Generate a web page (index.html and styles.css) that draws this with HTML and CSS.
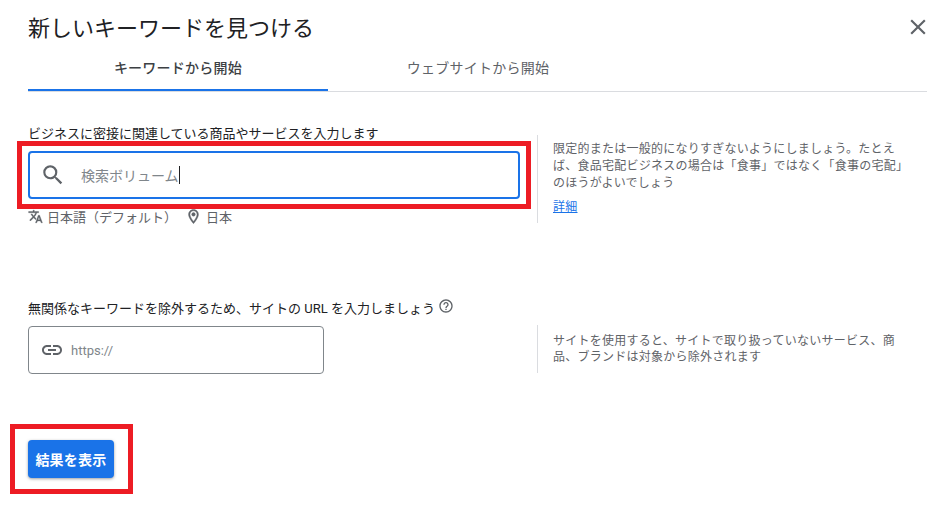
FILE: index.html
```html
<!DOCTYPE html>
<html lang="ja">
<head>
    <meta charset="UTF-8">
    <meta name="viewport" content="width=device-width, initial-scale=1.0">
    <title>新しいキーワードを見つける</title>
    <link rel="stylesheet" href="styles.css">
</head>
<body>
    <div class="dialog">
        <div class="dialog-header">
            <h2>新しいキーワードを見つける</h2>
            <svg class="close-icon" viewBox="0 0 24 24"><path d="M19 6.41 17.59 5 12 10.59 6.41 5 5 6.41 10.59 12 5 17.59 6.41 19 12 13.41 17.59 19 19 17.59 13.41 12z"/></svg>
        </div>
        <div class="tabs">
            <div class="tab active">キーワードから開始</div>
            <div class="tab">ウェブサイトから開始</div>
        </div>

        <div class="form-row first-row">
            <div class="form-main">
                <label class="field-label">ビジネスに密接に関連している商品やサービスを入力します</label>
                <div class="search-box">
                    <svg class="search-icon" viewBox="0 0 24 24"><path d="M15.5 14h-.79l-.28-.27A6.47 6.47 0 0 0 16 9.5 6.5 6.5 0 1 0 9.5 16c1.61 0 3.09-.59 4.23-1.57l.27.28v.79l5 4.99L20.49 19l-4.99-5zm-6 0C7.01 14 5 11.99 5 9.5S7.01 5 9.5 5 14 7.01 14 9.5 11.99 14 9.5 14z"/></svg>
                    <span class="search-text">検索ボリューム</span><span class="caret"></span>
                    <div class="highlight"></div>
                </div>
                <div class="locale">
                    <svg class="locale-icon" viewBox="0 0 24 24"><path d="m12.87 15.07-2.54-2.51.03-.03A17.52 17.52 0 0 0 14.07 6H17V4h-7V2H8v2H1v1.99h11.17C11.5 7.92 10.44 9.75 9 11.35 8.07 10.32 7.3 9.19 6.69 8h-2c.73 1.63 1.73 3.17 2.98 4.56l-5.09 5.02L4 19l5-5 3.11 3.11.76-2.04zM18.5 10h-2L12 22h2l1.12-3h4.75L21 22h2l-4.5-12zm-2.62 7 1.62-4.33L19.12 17h-3.24z"/></svg>
                    <span>日本語（デフォルト）</span>
                    <svg class="locale-icon pin" viewBox="0 0 24 24"><path d="M12 2C8.13 2 5 5.13 5 9c0 5.25 7 13 7 13s7-7.75 7-13c0-3.87-3.13-7-7-7zm0 17.1C10 16.5 7 12 7 9c0-2.76 2.24-5 5-5s5 2.24 5 5c0 3-3 7.5-5 10.1z"/><circle cx="12" cy="9" r="2.5"/></svg>
                    <span>日本</span>
                </div>
            </div>
            <div class="hint">
                <p>限定的または一般的になりすぎないようにしましょう。たとえば、食品宅配ビジネスの場合は「食事」ではなく「食事の宅配」のほうがよいでしょう</p>
                <a href="#" class="hint-link">詳細</a>
            </div>
        </div>

        <div class="form-row second-row">
            <div class="form-main">
                <label class="field-label">無関係なキーワードを除外するため、サイトの URL を入力しましょう<svg class="help-icon" viewBox="0 0 24 24"><path d="M11 18h2v-2h-2v2zm1-16C6.48 2 2 6.48 2 12s4.48 10 10 10 10-4.48 10-10S17.52 2 12 2zm0 18c-4.41 0-8-3.59-8-8s3.59-8 8-8 8 3.59 8 8-3.59 8-8 8zm0-14c-2.21 0-4 1.79-4 4h2c0-1.1.9-2 2-2s2 .9 2 2c0 2-3 1.75-3 5h2c0-2.25 3-2.5 3-5 0-2.21-1.79-4-4-4z"/></svg></label>
                <div class="url-box">
                    <svg class="link-icon" viewBox="0 0 24 24"><path d="M3.9 12c0-1.71 1.39-3.1 3.1-3.1h4V7H7c-2.76 0-5 2.24-5 5s2.24 5 5 5h4v-1.9H7c-1.71 0-3.1-1.39-3.1-3.1zM8 13h8v-2H8v2zm9-6h-4v1.9h4c1.71 0 3.1 1.39 3.1 3.1s-1.39 3.1-3.1 3.1h-4V17h4c2.76 0 5-2.24 5-5s-2.24-5-5-5z"/></svg>
                    <span class="url-text">https://</span>
                </div>
            </div>
            <div class="hint">
                <p>サイトを使用すると、サイトで取り扱っていないサービス、商品、ブランドは対象から除外されます</p>
            </div>
        </div>

        <div class="submit-wrap">
            <button type="button" class="submit-btn">結果を表示</button>
            <div class="highlight"></div>
        </div>
    </div>
</body>
</html>
```

FILE: styles.css
```css
body {
    margin: 0;
    background-color: white;
    color: #3c4043;
    font-family: Roboto, "Noto Sans CJK JP", sans-serif;
}
.dialog {
    padding: 0 11px 32px 28px;
}
.dialog-header {
    display: flex;
    justify-content: space-between;
    align-items: center;
    height: 56px;
}
h2 {
    margin: 2px 0 0;
    font-size: 22px;
    line-height: 28px;
    font-weight: 400;
    color: #202124;
}
.close-icon {
    width: 26px;
    height: 26px;
    margin: 0 -4px 2px 0;
    fill: #5f6368;
}
.tabs {
    display: flex;
    height: 35px;
    border-bottom: 1px solid #dadce0;
}
.tab {
    width: 300px;
    font-size: 14px;
    line-height: 24px;
    letter-spacing: 0.25px;
    text-align: center;
    color: #5f6368;
}
.tab.active {
    height: 33px;
    border-bottom: 2px solid #1a73e8;
    font-weight: 500;
    color: #3c4043;
}
.form-row {
    display: flex;
}
.first-row {
    margin-top: 43px;
    height: 88px;
}
.second-row {
    margin-top: 102px;
    height: 48px;
}
.form-main {
    width: 509px;
    flex-shrink: 0;
}
.first-row .form-main {
    margin-top: -9px;
}
.second-row .form-main {
    margin-top: -24px;
}
.field-label {
    display: flex;
    align-items: center;
    height: 16px;
    font-size: 13px;
    line-height: 16px;
    color: #202124;
}
.help-icon {
    width: 16px;
    height: 16px;
    margin: -6px 0 0 3px;
    fill: #5f6368;
}
.search-box {
    position: relative;
    display: flex;
    align-items: center;
    box-sizing: border-box;
    width: 492px;
    height: 48px;
    margin-top: 9px;
    padding-left: 10px;
    border: 2px solid #1a73e8;
    border-radius: 4px;
}
.search-icon {
    width: 26px;
    height: 26px;
    fill: #5f6368;
}
.search-text {
    margin-left: 15px;
    font-size: 14px;
    color: #80868b;
}
.caret {
    width: 1px;
    height: 18px;
    background-color: #202124;
}
.highlight {
    position: absolute;
    box-sizing: border-box;
    border: 5px solid #ed1c24;
}
.search-box .highlight {
    top: -12px;
    right: -13px;
    bottom: -12px;
    left: -13px;
}
.locale {
    display: flex;
    align-items: center;
    height: 18px;
    margin-top: 8px;
    font-size: 13px;
    color: #5f6368;
}
.locale-icon {
    width: 15px;
    height: 15px;
    margin-right: 4px;
    fill: #5f6368;
    stroke: #5f6368;
    stroke-width: 0.6;
}
.locale-icon.pin {
    width: 17px;
    height: 17px;
    margin-left: 8px;
    margin-right: 4px;
}
.url-box {
    display: flex;
    align-items: center;
    box-sizing: border-box;
    width: 296px;
    height: 48px;
    margin-top: 9px;
    padding-left: 11px;
    border: 1px solid #80868b;
    border-radius: 4px;
}
.link-icon {
    width: 24px;
    height: 24px;
    fill: #5f6368;
}
.url-text {
    margin-left: 7px;
    font-size: 13px;
    color: #80868b;
}
.hint {
    box-sizing: border-box;
    width: 390px;
    padding: 6px 23px 0 15px;
    border-left: 1px solid #dadce0;
    font-size: 12px;
    line-height: 17px;
    letter-spacing: 0.25px;
    color: #5f6368;
}
.second-row .hint {
    padding-top: 8px;
    line-height: 16px;
}
.hint p {
    margin: 0;
}
.hint-link {
    display: block;
    margin-top: 7px;
    color: #1a73e8;
}
.submit-wrap {
    position: relative;
    width: 86px;
    height: 38px;
    margin-top: 67px;
}
.submit-wrap .highlight {
    top: -16px;
    right: -19px;
    bottom: -16px;
    left: -18px;
}
.submit-btn {
    display: block;
    width: 86px;
    height: 38px;
    padding: 0;
    background-color: #1a73e8;
    color: white;
    border: none;
    border-radius: 4px;
    box-shadow: 0 1px 3px rgba(60, 64, 67, 0.5);
    font-family: inherit;
    font-size: 14px;
    font-weight: 700;
    letter-spacing: 0.25px;
    cursor: pointer;
}
```
